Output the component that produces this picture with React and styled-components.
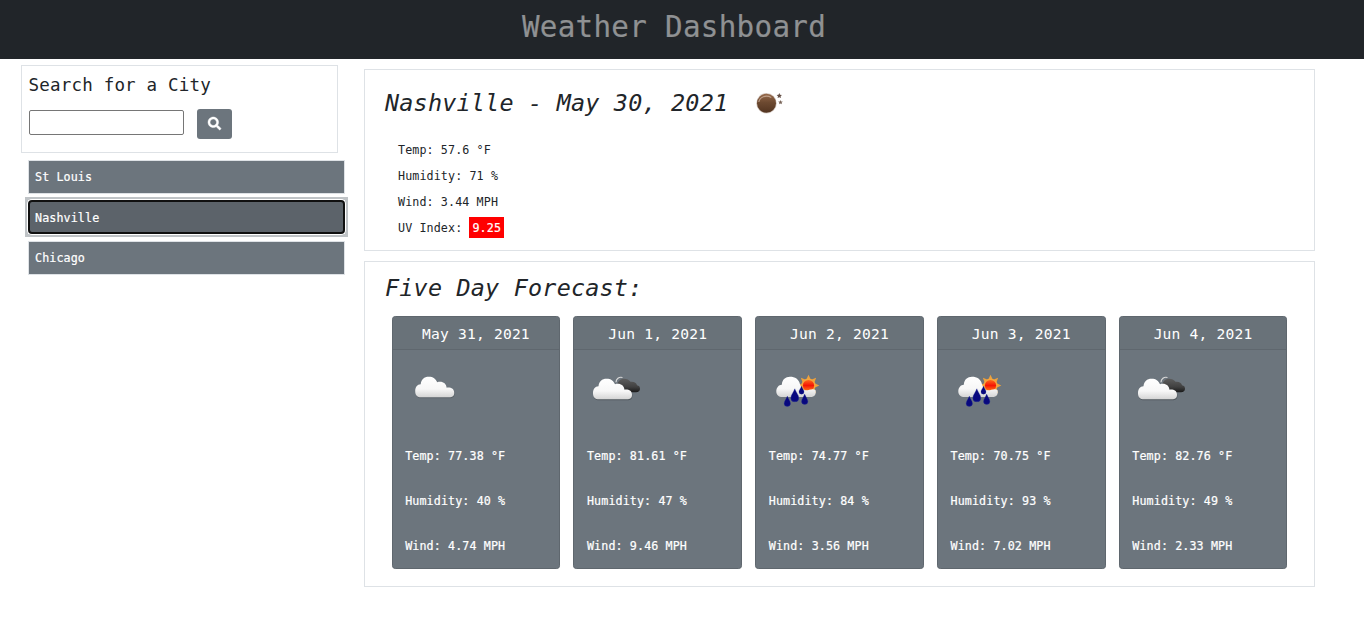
import React from "react";
import styled, { createGlobalStyle, css } from "styled-components";

const GlobalStyle = createGlobalStyle`
  *, *::before, *::after { box-sizing: border-box; }
  body {
    margin: 0;
    background: #fff;
    color: #212529;
    font-family: Consolas, "DejaVu Sans Mono", monospace;
    font-size: 11.7px;
    letter-spacing: 0.108px;
    line-height: 20px;
  }
  h1, h2, h3, p, ul { margin: 0; padding: 0; font-weight: 400; }
`;

const Header = styled.header`
  height: 59px;
  padding-top: 8px;
  padding-right: 16px;
  background: #212529;
  text-align: center;
`;

const Title = styled.h1`
  color: #8f9193;
  font-size: 29.25px;
  letter-spacing: 0.28px;
  line-height: 38px;
  -webkit-text-stroke: 0.2px #8f9193;
`;

const Layout = styled.main`
  display: flex;
  align-items: flex-start;
`;

const Sidebar = styled.aside`
  width: 324px;
  margin: 6px 19px 0 21px;
`;

const SearchPanel = styled.section`
  width: 317px;
  height: 88px;
  padding: 6px;
  border: 1px solid #dee2e6;
`;

const SearchTitle = styled.h2`
  padding: 1px 0 0 0.5px;
  font-size: 17.55px;
  letter-spacing: 0.18px;
  line-height: 24px;
`;

const SearchForm = styled.form`
  display: flex;
  align-items: flex-start;
  gap: 13px;
  margin: 12px 0 0 1px;
`;

const SearchInput = styled.input`
  width: 155px;
  height: 25px;
  margin-top: 1px;
  padding: 1px 4px;
  border: 1px solid #767676;
  border-radius: 2px;
  font: inherit;
`;

const SearchButton = styled.button`
  display: flex;
  align-items: center;
  justify-content: center;
  width: 35px;
  height: 30px;
  padding: 0;
  border: 0;
  border-radius: 3px;
  background: #6c757d;
  color: #fff;
  svg { display: block; margin-top: -2px; overflow: visible; }
`;

const CityList = styled.ul`
  display: flex;
  flex-direction: column;
  margin: 7px 0 0 7px;
  list-style: none;
`;

const CityItem = styled.li`
  height: 34px;
  margin-bottom: 6px;
  ${(p) => p.$focused && css`
    margin-bottom: 7px;
    background: #fff;
    box-shadow: 0 0 0 3px #bfc3c6;
  `}
`;

const CityButton = styled.button`
  display: block;
  width: 317px;
  height: 34px;
  padding: 0 6px;
  border: 1px solid #dee2e6;
  background: #6c757d;
  color: #fff;
  font: inherit;
  letter-spacing: inherit;
  text-align: left;
  -webkit-text-stroke: 0.2px #fff;
  ${(p) => p.$focused && css`
    padding: 1px 5px 0;
    border: 2px solid #101010;
    border-radius: 4px;
    background: #5c636a;
    box-shadow: 0 0 0 1px #fff;
  `}
`;

const Content = styled.div`
  display: flex;
  flex-direction: column;
  gap: 10px;
  width: 951px;
  margin-top: 10px;
`;

const Panel = styled.section`
  height: ${(p) => p.$height}px;
  padding: ${(p) => p.$top}px 26.6px 0 20px;
  border: 1px solid #dee2e6;
`;

const PanelTitle = styled.h2`
  display: flex;
  align-items: center;
  font-size: 23.4px;
  font-style: italic;
  letter-spacing: 0.22px;
  line-height: 32px;
`;

const MoonIcon = styled.svg`
  display: block;
  margin: -1px 0 0 27px;
`;

const Readings = styled.div`
  margin: 18px 0 0 13px;
  line-height: 26px;
`;

const UvBadge = styled.span`
  display: inline-block;
  height: 21px;
  padding: 0 3px;
  background: #f00;
  color: #fff;
  line-height: 22px;
  -webkit-text-stroke: 0.2px #fff;
`;

const CardGrid = styled.div`
  display: grid;
  grid-template-columns: repeat(5, 1fr);
  gap: 13.1px;
  margin: 12px 0 0 6.6px;
`;

const Card = styled.article`
  height: 253px;
  border: 1px solid #5f676e;
  border-radius: 3.25px;
  background: #6c757d;
  color: #fff;
  overflow: hidden;
`;

const CardDate = styled.h3`
  height: 33px;
  border-bottom: 1px solid #5f676e;
  background: #697279;
  font-size: 14.6px;
  letter-spacing: 0.2px;
  line-height: 33px;
  text-align: center;
`;

const CardBody = styled.div`
  padding: 8px 12.6px 0;
  -webkit-text-stroke: 0.2px #fff;
`;

const WeatherIcon = styled.svg`
  display: block;
  width: 65px;
  height: 65px;
`;

const Reading = styled.p`
  margin-top: ${(p) => (p.$first ? 23 : 25)}px;
`;

const FRONT_CLOUD =
  "M9 40c-4 0-6-2-6-6 0-4 2-7 5.500-7C9 22 12 19.500 16.500 19.500c4.500 0 7 2 8.500 5.500 5-1.500 9 1 9.500 5.500C39 30 42 32 42 35.500S40 40 37 40z";

function IconDefs() {
  return (
    <svg width="0" height="0" style={{ display: "block" }} aria-hidden="true">
      <defs>
        <linearGradient id="lightCloud" x1="0" y1="0" x2="0" y2="1">
          <stop offset="0" stopColor="#fff" />
          <stop offset=".6" stopColor="#f7f7f7" />
          <stop offset="1" stopColor="#d5d5d5" />
        </linearGradient>
        <linearGradient id="darkCloud" x1="0" y1="0" x2="0" y2="1">
          <stop offset="0" stopColor="#5c5c5c" />
          <stop offset=".6" stopColor="#404040" />
          <stop offset="1" stopColor="#191919" />
        </linearGradient>
        <linearGradient id="sunCore" x1="0" y1="0" x2="0" y2="1">
          <stop offset="0" stopColor="#ff6a1c" />
          <stop offset=".5" stopColor="#f51505" />
          <stop offset="1" stopColor="#ff7a18" />
        </linearGradient>
        <linearGradient id="moon" x1="0" y1="0" x2="0" y2="1">
          <stop offset="0" stopColor="#96694a" />
          <stop offset=".45" stopColor="#6d4a31" />
          <stop offset="1" stopColor="#523420" />
        </linearGradient>
      </defs>
    </svg>
  );
}

function Cloud() {
  return (
    <WeatherIcon viewBox="0 0 65 65">
      <g transform="translate(7.200 -.8)">
        <path d={FRONT_CLOUD} fill="#555c62" opacity=".7" transform="translate(.4 1)" />
        <path d={FRONT_CLOUD} fill="url(#lightCloud)" />
      </g>
    </WeatherIcon>
  );
}

function BrokenClouds() {
  return (
    <WeatherIcon viewBox="-2 -.3 65 65">
      <path d="M27 24c0-3.500 3-5.800 6.500-4.800" fill="none" stroke="#d8d8d8" strokeWidth="1.200" />
      <path
        d="M33 34c-3-1-5-4-4.500-7 0-4 3-6.500 6.500-6.500 3 0 5 1 6.500 3 3.500-.5 6 1 6.500 3.500 2 .3 3 1.500 3 3.500 0 2-1.500 3.500-4 3.500z"
        fill="url(#darkCloud)"
      />
      <g transform="translate(1 .9)">
        <path d={FRONT_CLOUD} fill="#444b50" opacity=".7" transform="translate(.4 1)" />
        <path d={FRONT_CLOUD} fill="url(#lightCloud)" />
      </g>
    </WeatherIcon>
  );
}

function SunShower() {
  const rays = [0, 45, 90, 135, 180, 225, 270, 315];
  const drops = [
    [13.300, 42, 1],
    [20.800, 36, 1.250],
    [27.500, 31, 0.8],
    [30.700, 40, 1],
  ];
  return (
    <WeatherIcon viewBox="-5 -1 65 65">
      {rays.map((angle) => (
        <path
          key={angle}
          d="M32.300 20.500l2.200-4.800 2.200 4.800z"
          fill="#efa13c"
          transform={`rotate(${angle} 34.500 26.500)`}
        />
      ))}
      <circle cx="34.500" cy="26.500" r="7" fill="#f5a63d" />
      <circle cx="34.500" cy="26.500" r="5.600" fill="url(#sunCore)" />
      <path
        d="M8.500 38c-3.700 0-6.200-2-6.200-5.500 0-4 2.500-6.800 5.500-6.800C8.300 20.500 11.500 17.800 16 17.800c5 0 9 2.500 10 7.400 .8 2.500 1.800 4.500 4 5.800 4 1.500 8-2.500 11.500 0 1 4.500-1 7-5 7z"
        fill="url(#lightCloud)"
      />
      {drops.map(([x, y, scale]) => (
        <path
          key={x}
          d="M0-5C1-2 3.200 0 3.200 2.500a3.200 2.900 0 0 1-6.400 0C-3.200 0-1-2 0-5z"
          fill="#08087e"
          stroke="#2e3c9b"
          strokeWidth=".3"
          transform={`translate(${x} ${y}) scale(${scale})`}
        />
      ))}
    </WeatherIcon>
  );
}

function Moon() {
  return (
    <MoonIcon width="30" height="24" viewBox="0 0 30 24">
      <circle cx="11.500" cy="12.300" r="10.300" fill="#d9cfc9" />
      <circle cx="11.500" cy="12.300" r="9.500" fill="url(#moon)" />
      <path d="M3.800 11c1-5 7-7.500 12.500-4.500" fill="none" stroke="#d6bba8" strokeWidth="1.200" opacity=".7" />
      <path d="M24.300 2l.8 1.700 1.900.2-1.400 1.300.4 1.900-1.700-.9-1.700.9.4-1.900-1.400-1.300 1.900-.2z" fill="#655047" />
      <path d="M25.500 9l.7 1.400 1.600.2-1.200 1.100.3 1.600-1.400-.8-1.400.8.3-1.600-1.200-1.100 1.600-.2z" fill="#7a665a" />
    </MoonIcon>
  );
}

function SearchIcon() {
  return (
    <svg width="13" height="13" viewBox="0 0 512 512" fill="currentColor">
      <path d="M505 442.700L405.300 343c-4.500-4.500-10.600-7-17-7H372c27.600-35.300 44-79.700 44-128C416 93.100 322.900 0 208 0S0 93.100 0 208s93.100 208 208 208c48.300 0 92.700-16.400 128-44v16.300c0 6.400 2.500 12.500 7 17l99.700 99.700c9.400 9.400 24.600 9.400 33.900 0l28.300-28.300c9.400-9.400 9.400-24.600.1-34zM208 336c-70.700 0-128-57.200-128-128 0-70.700 57.200-128 128-128 70.700 0 128 57.200 128 128 0 70.700-57.200 128-128 128z" stroke="currentColor" strokeWidth="18" />
    </svg>
  );
}

const cities = ["St Louis", "Nashville", "Chicago"];

const forecast = [
  { date: "May 31, 2021", Icon: Cloud, temp: 77.38, humidity: 40, wind: 4.74 },
  { date: "Jun 1, 2021", Icon: BrokenClouds, temp: 81.61, humidity: 47, wind: 9.46 },
  { date: "Jun 2, 2021", Icon: SunShower, temp: 74.77, humidity: 84, wind: 3.56 },
  { date: "Jun 3, 2021", Icon: SunShower, temp: 70.75, humidity: 93, wind: 7.02 },
  { date: "Jun 4, 2021", Icon: BrokenClouds, temp: 82.76, humidity: 49, wind: 2.33 },
];

export default function App() {
  return (
    <>
      <GlobalStyle />
      <IconDefs />
      <Header>
        <Title>Weather Dashboard</Title>
      </Header>
      <Layout>
        <Sidebar>
          <SearchPanel>
            <SearchTitle>Search for a City</SearchTitle>
            <SearchForm>
              <SearchInput type="text" />
              <SearchButton type="button">
                <SearchIcon />
              </SearchButton>
            </SearchForm>
          </SearchPanel>
          <CityList>
            {cities.map((city) => (
              <CityItem key={city} $focused={city === "Nashville"}>
                <CityButton $focused={city === "Nashville"}>{city}</CityButton>
              </CityItem>
            ))}
          </CityList>
        </Sidebar>
        <Content>
          <Panel $height={182} $top={17}>
            <PanelTitle>
              Nashville - May 30, 2021
              <Moon />
            </PanelTitle>
            <Readings>
              <p>Temp: 57.6 °F</p>
              <p>Humidity: 71 %</p>
              <p>Wind: 3.44 MPH</p>
              <p>
                UV Index: <UvBadge>9.25</UvBadge>
              </p>
            </Readings>
          </Panel>
          <Panel $height={326} $top={10}>
            <PanelTitle>Five Day Forecast:</PanelTitle>
            <CardGrid>
              {forecast.map(({ date, Icon, temp, humidity, wind }) => (
                <Card key={date}>
                  <CardDate>{date}</CardDate>
                  <CardBody>
                    <Icon />
                    <Reading $first>Temp: {temp} °F</Reading>
                    <Reading>Humidity: {humidity} %</Reading>
                    <Reading>Wind: {wind} MPH</Reading>
                  </CardBody>
                </Card>
              ))}
            </CardGrid>
          </Panel>
        </Content>
      </Layout>
    </>
  );
}
